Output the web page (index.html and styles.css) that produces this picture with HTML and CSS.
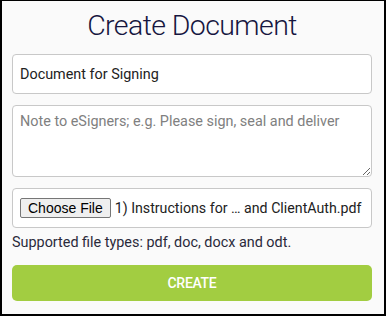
FILE: index.html
```html
<!DOCTYPE html>
<html>
<head>
<meta charset="utf-8">
<link rel="stylesheet" href="styles.css">
</head>
<body>
<div class="panel">
  <h1 class="title">Create Document</h1>
  <input class="field" type="text" value="Document for Signing">
  <textarea class="note" placeholder="Note to eSigners; e.g. Please sign, seal and deliver"></textarea>
  <div class="filebox">
    <span class="choose">Choose File</span>
    <span class="filename">1) Instructions for … and ClientAuth.pdf</span>
  </div>
  <p class="hint">Supported file types: pdf, doc, docx and odt.</p>
  <button class="create">CREATE</button>
</div>
</body>
</html>
```
FILE: styles.css
```css
html, body {
  margin: 0;
  padding: 0;
  background: #fafafa;
}
.panel {
  box-sizing: border-box;
  width: 386px;
  height: 316px;
  border-style: solid;
  border-color: #000;
  border-width: 1px 2px 2px 2px;
  background: #fafafa;
  padding: 0 12px 0 10px;
  display: flex;
  flex-direction: column;
  font-family: Roboto, "Liberation Sans", sans-serif;
}
.title {
  margin: 0;
  height: 53px;
  line-height: 50px;
  text-align: center;
  font-family: Roboto, sans-serif;
  font-weight: 300;
  font-size: 28.5px;
  letter-spacing: -0.6px;
  color: #16163f;
}
.field {
  box-sizing: border-box;
  width: 100%;
  height: 40px;
  margin: 0;
  padding: 0 7px;
  border: 1px solid #c8c8c8;
  border-radius: 4px;
  background: #fff;
  font-family: Roboto, sans-serif;
  font-size: 14.4px;
  color: #222;
  outline: none;
}
.note {
  box-sizing: border-box;
  width: 100%;
  height: 72px;
  margin: 11px 0 0 0;
  padding: 6px 7px;
  border: 1px solid #c8c8c8;
  border-radius: 4px;
  background: #fff;
  font-family: Roboto, sans-serif;
  font-size: 14.4px;
  line-height: 20px;
  color: #222;
  resize: vertical;
  outline: none;
  display: block;
}
.note::placeholder {
  color: #808080;
}
.filebox {
  box-sizing: border-box;
  height: 40px;
  margin-top: 11px;
  border: 1px solid #c8c8c8;
  border-radius: 4px;
  background: #fff;
  display: flex;
  align-items: center;
  padding: 0 7px;
  gap: 4px;
}
.choose {
  flex-shrink: 0;
  white-space: nowrap;
  box-sizing: border-box;
  height: 20px;
  padding: 0 7px;
  border: 1px solid #767676;
  border-radius: 2px;
  background: #efefef;
  font-family: "Liberation Sans", Arial, sans-serif;
  font-size: 14px;
  line-height: 18px;
  color: #000;
}
.filename {
  font-size: 14.2px;
  color: #222;
  white-space: nowrap;
}
.hint {
  margin: 5px 0 0 0;
  font-size: 14.4px;
  line-height: 20px;
  color: #2a2a3a;
}
.create {
  margin-top: 12px;
  height: 36px;
  width: 100%;
  border: none;
  border-radius: 5px;
  background: #a2cd41;
  color: #fff;
  font-family: Roboto, sans-serif;
  font-weight: 500;
  font-size: 14px;
  letter-spacing: -0.3px;
}
```
